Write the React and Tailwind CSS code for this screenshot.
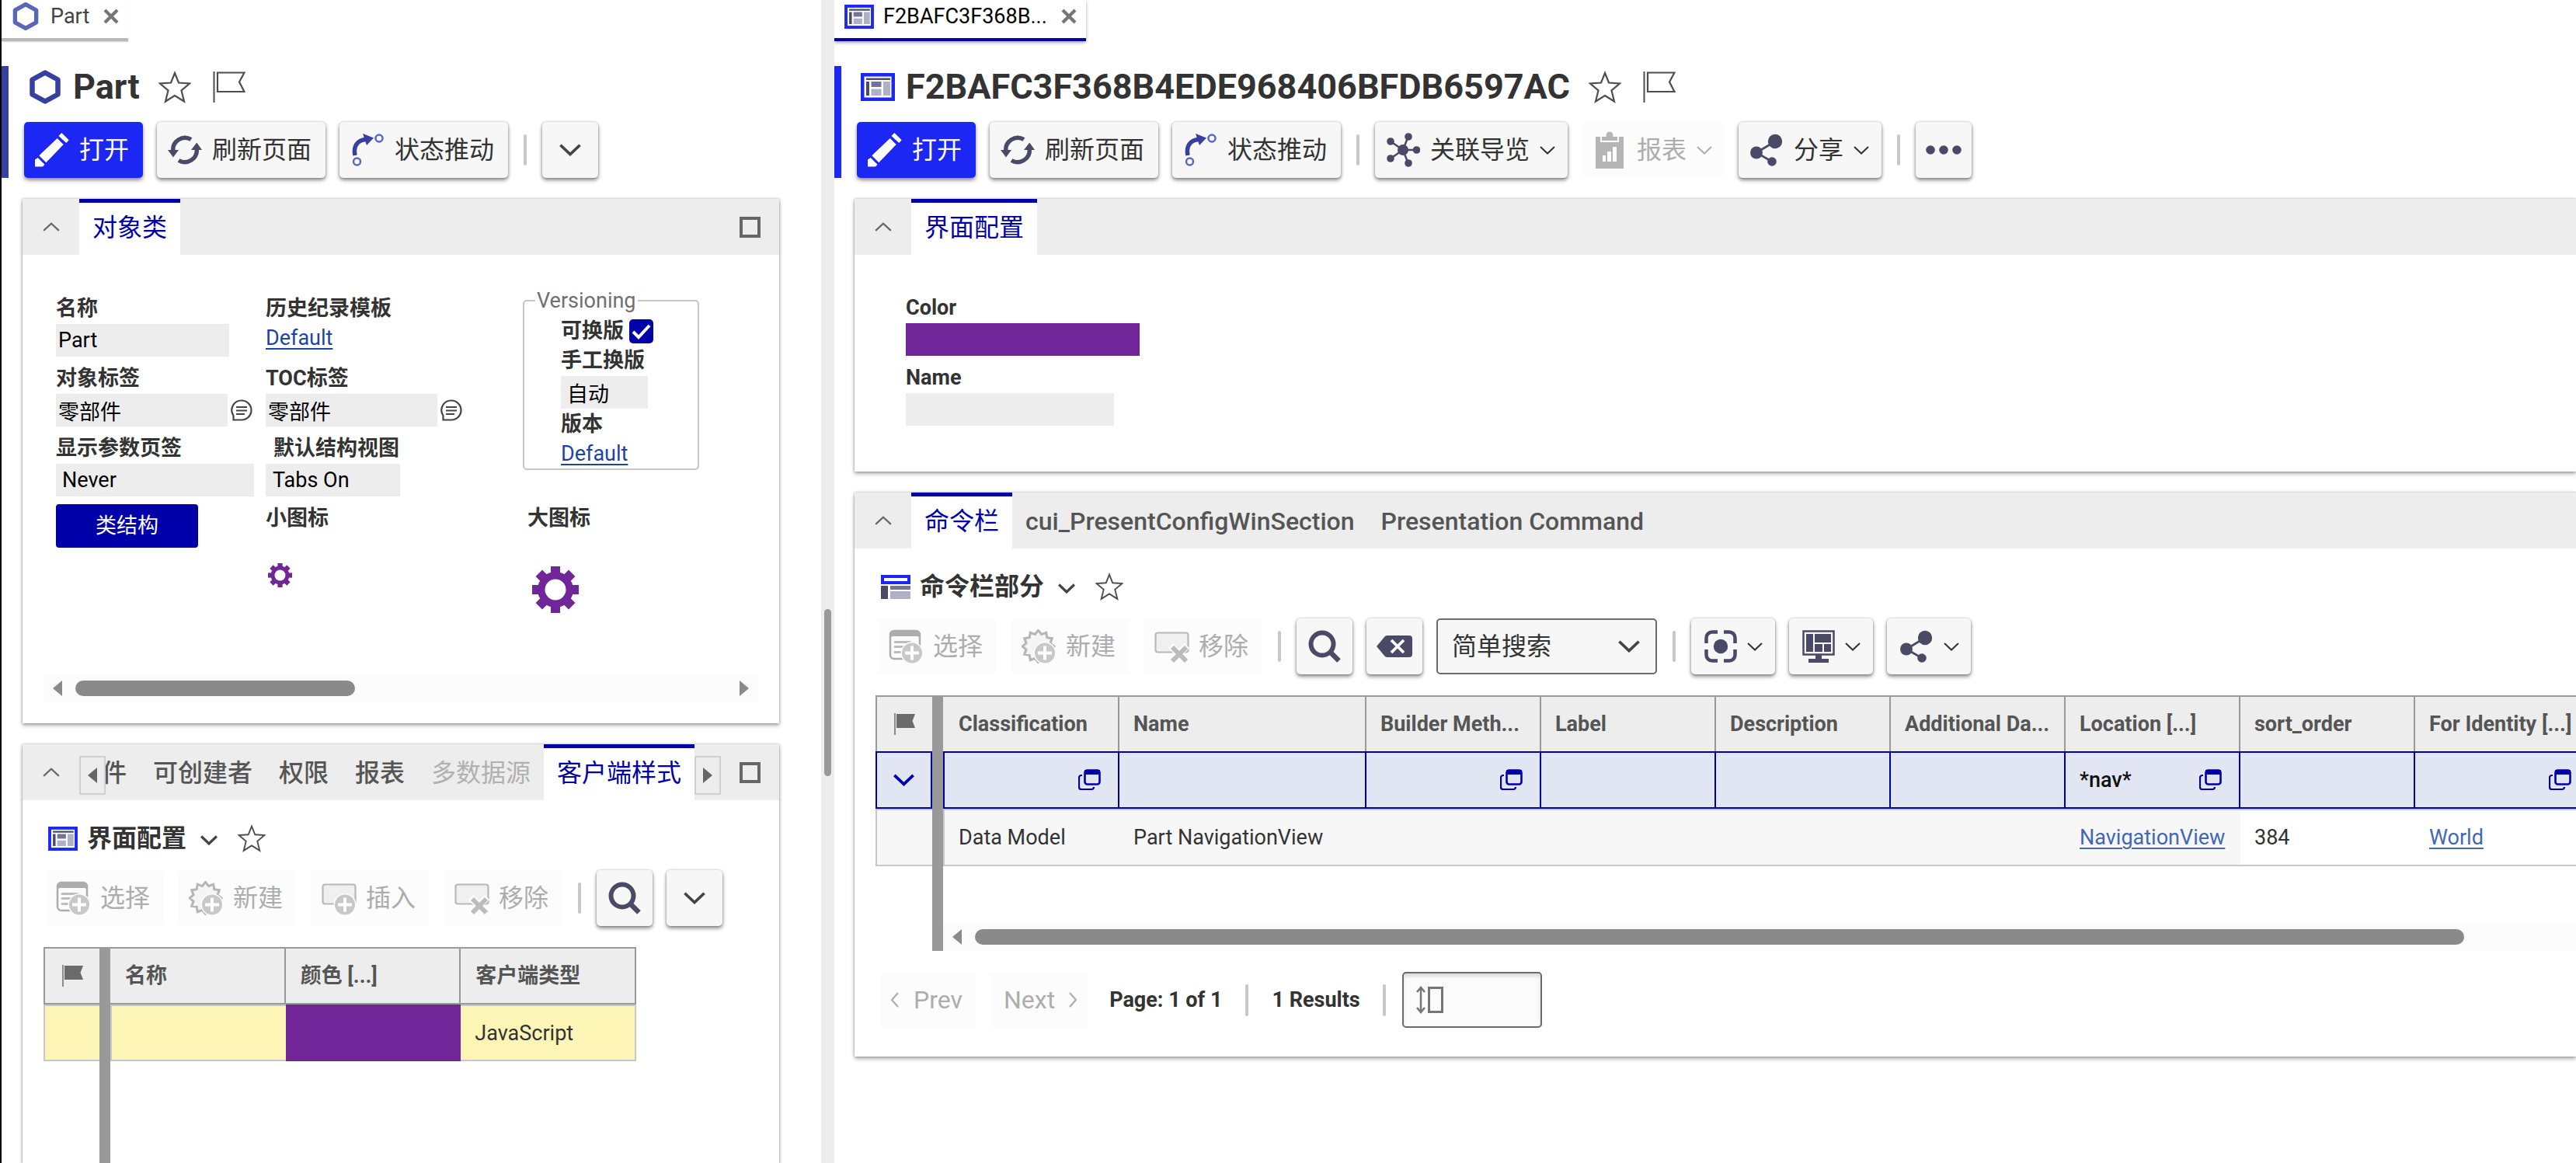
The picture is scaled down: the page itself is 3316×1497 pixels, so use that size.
import React from "react";

/* ---------- icons ---------- */

function Svg({ w = 44, h = 44, vw, vh, children, className = "" }) {
  return (
    <svg
      width={w}
      height={h}
      viewBox={`0 0 ${vw || w} ${vh || h}`}
      fill="none"
      aria-hidden="true"
      className={`shrink-0 ${className}`}
    >
      {children}
    </svg>
  );
}

const DARK = "#4a4a66";

function Hexagon({ w, h, color }) {
  return (
    <Svg w={w} h={h} vw={42} vh={46}>
      <path d="M21 4.5 37.5 13.5v19L21 41.5 4.5 32.5v-19Z" stroke={color} strokeWidth="6.5" strokeLinejoin="round" />
    </Svg>
  );
}

function FormIcon({ w, h }) {
  return (
    <Svg w={w} h={h} vw={44} vh={36}>
      <path d="M0 0h44v36H0z" fill="#1c27f4" />
      <path d="M4.500 4.500h35v27h-35z" fill="#fff" />
      <path d="M7 6.500h31v2.500H7zM7 11h4v18H7z" fill={DARK} />
      <path d="M13.500 11h13v7h-13z" fill="#74749a" />
      <path d="M13.500 20.500h13V29h-13zM29 11h9v18h-9z" fill="#b0b0c8" />
    </Svg>
  );
}

function SectionIcon() {
  return (
    <Svg w={38} h={31}>
      <path d="M0 0h38v12H0z" fill="#1c27f4" />
      <path d="M4 4h30v4H4z" fill="#fff" />
      <path d="M0 14h9v17H0z" fill={DARK} />
      <path d="M12 14h26v5H12z" fill="#74749a" />
      <path d="M12 21h26v10H12z" fill="#b0b0c8" />
    </Svg>
  );
}

function Star({ size = 42 }) {
  return (
    <Svg w={size} h={size} vw={42} vh={42}>
      <path
        d="M21 3 26 15.500 40 16.500 29.500 25.500 33 39.500 21 32 9 39.500 12.500 25.500 2 16.500 16 15.500Z"
        stroke="#4d4d4d"
        strokeWidth="2.200"
      />
    </Svg>
  );
}

function FlagOutline() {
  return (
    <Svg w={42} h={42}>
      <path d="M1.500 1v40" stroke="#4d4d4d" strokeWidth="2" />
      <path d="M6 2.500h34.500L34 14.500l6.500 12.500H6Z" stroke="#4d4d4d" strokeWidth="2.200" />
    </Svg>
  );
}

function FlagSolid() {
  return (
    <Svg w={28} h={28}>
      <path d="M1 0v28" stroke="#6b6b6b" strokeWidth="1.500" />
      <path d="M3 1h24l-3.500 9L27 19H3Z" fill="#6b6b6b" />
    </Svg>
  );
}

function Cross() {
  return (
    <Svg w={20} h={20}>
      <path d="m2 2 16 16M18 2 2 18" stroke="#757575" strokeWidth="4.200" />
    </Svg>
  );
}

function Chevron({ w = 20, h = 11, color = "#444", stroke = 2, up = false }) {
  return (
    <Svg w={w} h={h} vw={20} vh={11}>
      <path d={up ? "m1 10 9-8.500L19 10" : "m1 1 9 8.500L19 1"} stroke={color} strokeWidth={stroke} />
    </Svg>
  );
}

function SideChevron({ right = false }) {
  return (
    <Svg w={12} h={20}>
      <path d={right ? "m2 1 8 9-8 9" : "m10 1-8 9 8 9"} stroke="#adadad" strokeWidth="2.200" />
    </Svg>
  );
}

function Triangle({ right = false, color = "#8a8a8a" }) {
  return (
    <Svg w={12} h={20}>
      <path d={right ? "M0 0v20l12-10Z" : "M12 0v20L0 10Z"} fill={color} />
    </Svg>
  );
}

function SquareIcon() {
  return (
    <Svg w={27} h={27}>
      <path d="M2 2h23v23H2z" stroke="#666" strokeWidth="4" />
    </Svg>
  );
}

function Pencil() {
  return (
    <Svg>
      <path
        d="M34.300 0 43.700 9.300 40.300 13 30.500 4ZM28.700 7l8 8L14.300 38.300l-9-9ZM0 43.500V34.500L3.700 32 12.500 40.700 10 43.500Z"
        fill="#fff"
      />
    </Svg>
  );
}

function Refresh() {
  return (
    <Svg>
      <path d="M6.700 23A15.500 15.500 0 0 1 30 8.500" stroke={DARK} strokeWidth="5.500" />
      <path d="M0 22h14L7 31.500Z" fill={DARK} />
      <path d="M37.300 21A15.500 15.500 0 0 1 14 35.500" stroke={DARK} strokeWidth="5.500" />
      <path d="M30 22h14L37.300 12.500Z" fill={DARK} />
    </Svg>
  );
}

function StateIcon() {
  return (
    <Svg>
      <path d="M6 29C3.500 17 9 9.500 20 8.500" stroke="#36419f" strokeWidth="5.500" />
      <path d="m16 1 14 5.500L21 16Z" fill="#36419f" />
      <circle cx="37" cy="7" r="4.500" stroke="#5b66c0" strokeWidth="2.500" />
      <circle cx="8.500" cy="37" r="4.500" stroke="#5b66c0" strokeWidth="2.500" />
    </Svg>
  );
}

function GraphIcon() {
  return (
    <Svg>
      <path d="M22 22 29 4M22 22 6 11M22 22h18M22 22 6 33M22 22l7 18" stroke={DARK} strokeWidth="2.500" />
      <circle cx="22" cy="22" r="7" fill={DARK} />
      {[[29, 5], [6, 11], [39.5, 22], [6, 33], [29, 39]].map(([x, y]) => (
        <circle key={`${x}-${y}`} cx={x} cy={y} r="4.800" fill={DARK} />
      ))}
    </Svg>
  );
}

function ReportIcon() {
  return (
    <Svg w={38} h={48}>
      <path d="M1 7h36v41H1z" fill="#b5b5b5" />
      <path d="M8 6h22v7H8z" fill="#b5b5b5" stroke="#fcfcfc" strokeWidth="2" />
      <circle cx="19" cy="5" r="4.500" fill="#b5b5b5" />
      <path d="M10 31h4v8h-4zM16 26h5v13h-5zM23 20h5v19h-5z" fill="#fcfcfc" />
    </Svg>
  );
}

function ShareIcon() {
  return (
    <Svg>
      <path d="M33 11 9 25.500 29 37" stroke={DARK} strokeWidth="2.800" />
      <circle cx="33" cy="11" r="9.200" fill={DARK} />
      <circle cx="9" cy="25.500" r="8" fill={DARK} />
      <circle cx="29" cy="37" r="5.800" fill={DARK} />
    </Svg>
  );
}

function Dots() {
  return (
    <Svg w={46} h={12}>
      <circle cx="6" cy="6" r="5.800" fill={DARK} />
      <circle cx="23" cy="6" r="5.800" fill={DARK} />
      <circle cx="40" cy="6" r="5.800" fill={DARK} />
    </Svg>
  );
}

function SearchIcon() {
  return (
    <Svg w={42} h={42}>
      <circle cx="18" cy="18" r="14.500" stroke={DARK} strokeWidth="6" />
      <path d="m28 28 11.500 11.500" stroke={DARK} strokeWidth="6.500" />
    </Svg>
  );
}

function ClearIcon() {
  return (
    <Svg w={46} h={28}>
      <path d="M14 0h28a4 4 0 0 1 4 4v20a4 4 0 0 1-4 4H14c-2 0-3-.8-4-2L0 14 10 2c1-1.200 2-2 4-2Z" fill={DARK} />
      <path d="m19 6 16 16M35 6 19 22" stroke="#fff" strokeWidth="3.800" />
    </Svg>
  );
}

function FocusIcon() {
  return (
    <Svg w={42} h={42}>
      <path
        d="M2.500 17V10a7.500 7.500 0 0 1 7.500-7.500h7M25 2.500h7a7.500 7.500 0 0 1 7.500 7.500v7M39.500 25v7a7.500 7.500 0 0 1-7.500 7.500h-7M17 39.500h-7A7.500 7.500 0 0 1 2.500 32v-7"
        stroke={DARK}
        strokeWidth="4.500"
      />
      <circle cx="21" cy="21" r="9.200" fill={DARK} />
    </Svg>
  );
}

function MonitorIcon() {
  return (
    <Svg w={42} h={42}>
      <path d="M1.500 1.500h39v30h-39z" stroke={DARK} strokeWidth="2.500" />
      <path d="M5 5h9v23H5zM16 5h21v11H16zM16 18h10v10H16zM28 18h9v10h-9zM17 32h8v5h9v5H8v-5h9z" fill={DARK} />
    </Svg>
  );
}

function PlusBadge() {
  return (
    <>
      <circle cx="30" cy="30.500" r="14.500" fill="#fcfcfc" />
      <circle cx="30" cy="30.500" r="13" fill="#c8c8c8" />
      <path d="M30 21.500v18M21 30.500h18" stroke="#fff" strokeWidth="4" />
    </>
  );
}

function SelectIcon() {
  return (
    <Svg w={44} h={44}>
      <path d="M2 7a5 5 0 0 1 5-5h28a5 5 0 0 1 5 5v26a5 5 0 0 1-5 5H7a5 5 0 0 1-5-5Z" fill="#fcfcfc" stroke="#adadad" strokeWidth="2.500" />
      <path d="M1 13V7a6 6 0 0 1 6-6h28a6 6 0 0 1 6 6v6q-1-4-5-4H6q-4 0-5 4Z" fill="#adadad" />
      <path d="M8 16.500h20M8 22.500h13M8 29.500h12" stroke="#bcbcbc" strokeWidth="3" strokeLinecap="round" />
      <PlusBadge />
    </Svg>
  );
}

const BURST = Array.from({ length: 24 }, (_, i) => {
  const radius = i % 2 ? 16 : 20.5;
  const angle = (i * Math.PI) / 12 - Math.PI / 2;
  return `${21.5 + radius * Math.cos(angle)},${22 + radius * Math.sin(angle)}`;
}).join(" ");

function NewIcon() {
  return (
    <Svg w={44} h={44}>
      <polygon points={BURST} fill="#f5f5f5" stroke="#b5b5b5" strokeWidth="3" />
      <PlusBadge />
    </Svg>
  );
}

function InsertIcon() {
  return (
    <Svg w={45} h={44}>
      <rect x="1.500" y="4.500" width="42" height="25" rx="3" fill="#f0f0f0" stroke="#b8b8b8" strokeWidth="2.200" />
      <PlusBadge />
    </Svg>
  );
}

function RemoveIcon() {
  return (
    <Svg w={45} h={44}>
      <rect x="1.500" y="4.500" width="42" height="25" rx="3" fill="#f0f0f0" stroke="#b8b8b8" strokeWidth="2.200" />
      <path d="m21 21 21 21M42 21 21 42" stroke="#fcfcfc" strokeWidth="9" />
      <path d="m23 23 18 18M41 23 23 41" stroke="#bcbcbc" strokeWidth="6" />
    </Svg>
  );
}

function Note() {
  return (
    <Svg w={28} h={28}>
      <path d="M14 1.500A12.500 12.500 0 1 1 14 26.500H3.500V21A12.500 12.500 0 0 1 14 1.500Z" stroke="#444" strokeWidth="2.200" />
      <path d="M7 10h14M7 14.500h14M7 19h11" stroke="#444" strokeWidth="2" />
    </Svg>
  );
}

function Gear({ size }) {
  return (
    <Svg w={size} h={size} vw={60} vh={60}>
      <g fill="#702599">
        {[0, 45, 90, 135].map((a) => (
          <path key={a} d="M24 0h12v60H24z" transform={`rotate(${a} 30 30)`} />
        ))}
        <circle cx="30" cy="30" r="23" />
      </g>
      <circle cx="30" cy="30" r="13.500" fill="#fff" />
    </Svg>
  );
}

function Lookup() {
  return (
    <Svg w={29} h={28}>
      <path d="M5 8H4a3 3 0 0 0-3 3v12a3 3 0 0 0 3 3h13a3 3 0 0 0 3-3" stroke="#0000aa" strokeWidth="2.200" />
      <rect x="8.500" y="1.500" width="19" height="18" rx="3" stroke="#0000aa" strokeWidth="2.600" />
      <path d="M8 1h20v6H8z" fill="#0000aa" />
    </Svg>
  );
}

function PageSizeIcon() {
  return (
    <Svg w={36} h={36}>
      <path d="M6 4v28M1 8l5-6 5 6M1 28l5 6 5-6" stroke="#757575" strokeWidth="2.500" />
      <path d="M16.500 2.500h17v31h-17z" stroke="#757575" strokeWidth="3" />
    </Svg>
  );
}

/* ---------- shared controls ---------- */

const BTN = "flex h-[72px] shrink-0 items-center rounded-[5px] text-[32px] leading-9 whitespace-nowrap";
const RAISED = "bg-[#f7f7f7] text-[#333] shadow-[0_0_3px_rgba(0,0,0,0.25),0_3px_5px_rgba(0,0,0,0.45)]";

function Tool({ icon, label, menu, primary, disabled }) {
  const look = primary
    ? "bg-[#1c27f4] text-white shadow-[0_3px_5px_rgba(0,0,0,0.45)]"
    : disabled
    ? "bg-[#fcfcfc] text-[#adadad]"
    : RAISED;
  return (
    <button type="button" disabled={disabled} className={`${BTN} gap-[13px] pl-[14px] ${menu ? "pr-4" : "pr-[18px]"} ${look}`}>
      <span className="flex w-11 justify-center">{icon}</span>
      {label}
      {menu && <Chevron color={disabled ? "#adadad" : "#333"} />}
    </button>
  );
}

function IconTool({ label, children, wide }) {
  return (
    <button type="button" aria-label={label} className={`${BTN} justify-center gap-[13px] ${wide ? "w-[108px]" : "w-[72px]"} ${RAISED}`}>
      {children}
    </button>
  );
}

function Sep() {
  return <span className="mx-[2px] h-10 w-1 shrink-0 rounded-full bg-[#c8c8c8]" />;
}

function DocTab({ icon, label, active }) {
  return (
    <div className="flex">
      <div
        className={`flex h-[53px] items-center border-b-4 pr-3 pb-[7px] pl-[13px] text-[27px] leading-8 ${
          active ? "border-[#0000aa] text-black shadow-[0_2px_4px_rgba(0,0,0,0.35)]" : "border-[#b9b9b9] text-[#444] shadow-[0_1px_1px_rgba(0,0,0,0.15)]"
        }`}
      >
        {icon}
        <span className={active ? "ml-3" : "ml-[14px]"}>{label}</span>
        <button type="button" aria-label="Close tab" className="ml-[18px]">
          <Cross />
        </button>
      </div>
    </div>
  );
}

function ItemHeader({ bar, icon, title, children }) {
  return (
    <header className={`mt-8 border-l-[9px] ${bar}`}>
      <div className="flex h-[54px] items-center pl-[25px]">
        {icon}
        <h1 className="ml-[14px] text-[45px] leading-[54px] font-bold text-[#333]">{title}</h1>
        <button type="button" aria-label="Favorite" className="ml-6">
          <Star />
        </button>
        <button type="button" aria-label="Flag" className="ml-7">
          <FlagOutline />
        </button>
      </div>
      <div className="mt-[18px] flex items-center gap-[18px] pl-5">{children}</div>
    </header>
  );
}

function Panel({ tabs, className = "", children }) {
  return (
    <section className={`bg-white shadow-[0_0_3px_rgba(0,0,0,0.3),0_3px_5px_rgba(0,0,0,0.3)] ${className}`}>
      <div className="flex h-[72px] bg-[#ededed]">
        <button type="button" aria-label="Collapse" className="flex w-[73px] shrink-0 items-center justify-center">
          <Chevron up w={22} h={12} color="#666" />
        </button>
        {tabs}
      </div>
      {children}
    </section>
  );
}

function Tab({ label, active, disabled }) {
  const look = active
    ? "border-[#0000aa] bg-white text-[#0000aa]"
    : disabled
    ? "border-transparent text-[#b0b0b0]"
    : "border-transparent font-medium text-[#555]";
  return (
    <button
      type="button"
      disabled={disabled}
      className={`shrink-0 border-t-[5px] px-[17px] pb-1 text-[32px] leading-10 whitespace-nowrap ${look}`}
    >
      {label}
    </button>
  );
}

function Maximize() {
  return (
    <button type="button" aria-label="Maximize" className="mr-6 ml-auto self-center">
      <SquareIcon />
    </button>
  );
}

function RelTitle({ icon, label }) {
  return (
    <div className="flex h-10 items-center">
      {icon}
      <h2 className="ml-3 text-[32px] leading-10 font-bold text-[#333]">{label}</h2>
      <button type="button" aria-label="Views" className="mt-1 ml-[18px]">
        <Chevron w={22} h={13} stroke={3} />
      </button>
      <button type="button" aria-label="Favorite" className="ml-[26px]">
        <Star size={36} />
      </button>
    </div>
  );
}

const LABEL = "block text-[27px] leading-9 font-bold whitespace-nowrap text-[#333]";
const INPUT = "h-[42px] bg-[#ededed] text-[27px] leading-8 text-black";
const LINK = "text-[27px] leading-9 text-[#1e43a5] underline decoration-2 underline-offset-4";

function Field({ id, label, value, className, indent = "pl-[3px]", labelIndent = "", note }) {
  return (
    <div className="flex flex-col gap-[2px]">
      <label htmlFor={id} className={`${LABEL} ${labelIndent}`}>
        {label}
      </label>
      <div className="flex items-center gap-1">
        <input id={id} readOnly defaultValue={value} className={`${INPUT} ${indent} ${className}`} />
        {note && (
          <button type="button" aria-label="Translate">
            <Note />
          </button>
        )}
      </div>
    </div>
  );
}

const TH = "h-[72px] border-t-2 border-r-2 border-[#999] bg-[#ededed] text-left text-[27px] leading-8 font-bold text-[#555]";

/* ---------- left pane ---------- */

function ClassForm() {
  return (
    <div className="flex h-[603px] flex-col px-[27px] pt-[45px] pb-[27px]">
      <div className="flex pl-4">
        <div className="grid grid-cols-[270px_331px] gap-y-[10px] self-start pt-[6px]">
          <Field id="name" label="名称" value="Part" className="w-[223px]" />
          <div className="flex flex-col items-start gap-[2px]">
            <span className={LABEL}>历史纪录模板</span>
            <a href="#history" className={LINK}>Default</a>
          </div>
          <Field id="label" label="对象标签" value="零部件" className="w-[221px]" note />
          <Field id="toc" label="TOC标签" value="零部件" className="w-[221px]" note />
          <Field id="params" label="显示参数页签" value="Never" className="w-[255px]" indent="pl-2" />
          <Field id="structure" label="默认结构视图" value="Tabs On" className="w-[173px]" indent="pl-[9px]" labelIndent="pl-[10px]" />
        </div>
        <fieldset className="w-[227px] self-start rounded-[5px] border-2 border-[#c6c6c6] pt-[7px] pb-[1px] pl-[47px]">
          <legend className="-ml-[33px] px-[2px] text-[27px] leading-7 text-[#707070]">Versioning</legend>
          <div className="flex flex-col items-start gap-[2px]">
            <div className="flex items-center gap-[7px]">
              <label htmlFor="versionable" className={LABEL}>可换版</label>
              <span className="grid">
                <input
                  id="versionable"
                  type="checkbox"
                  defaultChecked
                  className="col-start-1 row-start-1 size-[31px] appearance-none rounded-[5px] bg-[#0000aa]"
                />
                <Svg w={31} h={31} className="pointer-events-none col-start-1 row-start-1">
                  <path d="m5 16 7 7L26 8" stroke="#fff" strokeWidth="4" />
                </Svg>
              </span>
            </div>
            <label htmlFor="manual" className={LABEL}>手工换版</label>
            <input id="manual" readOnly defaultValue="自动" className={`${INPUT} w-28 pl-2`} />
            <span className={LABEL}>版本</span>
            <a href="#revision" className={LINK}>Default</a>
          </div>
        </fieldset>
      </div>
      <div className="mt-[10px] grid grid-cols-[270px_337px_1fr] pl-4">
        <div>
          <button type="button" className="h-14 w-[183px] rounded-[4px] bg-[#0000aa] text-[27px] leading-8 text-white">
            类结构
          </button>
        </div>
        <div>
          <span className={LABEL}>小图标</span>
          <div className="mt-10 pl-[3px]"><Gear size={31} /></div>
        </div>
        <div>
          <span className={LABEL}>大图标</span>
          <div className="mt-11 pl-[6px]"><Gear size={60} /></div>
        </div>
      </div>
      <div className="mt-auto flex h-9 items-center bg-[#fbfbfb] px-3">
        <Triangle />
        <div className="mx-[17px] flex-1">
          <div className="h-5 w-[43%] rounded-full bg-[#8a8a8a]" />
        </div>
        <Triangle right />
      </div>
    </div>
  );
}

function StyleGrid() {
  return (
    <div className="mt-[27px] ml-[27px] flex flex-1">
      <table aria-label="行标记" className="w-[72px] table-fixed border-separate border-spacing-0 self-start">
        <thead>
          <tr>
            <th className="h-[74px] border-y-2 border-l-2 border-[#999] bg-[#ededed] pl-[22px]"><FlagSolid /></th>
          </tr>
        </thead>
        <tbody>
          <tr>
            <td className="h-[73px] border-y-2 border-l-2 border-[#c8c8c8] bg-[#fcf5b5]" />
          </tr>
        </tbody>
      </table>
      <div className="w-[14px] shrink-0 bg-[#999]" />
      <table aria-label="客户端样式" className="w-[677px] table-fixed border-separate border-spacing-0 self-start">
        <thead>
          <tr>
            {["名称", "颜色 [...]", "客户端类型"].map((t) => (
              <th key={t} scope="col" className="h-[74px] border-y-2 border-r-2 border-[#999] bg-[#ededed] pl-[19px] text-left text-[27px] leading-8 font-bold text-[#555]">
                {t}
              </th>
            ))}
          </tr>
        </thead>
        <tbody>
          <tr>
            <td className="h-[73px] border-y-2 border-l-2 border-[#c8c8c8] bg-[#fcf5b5]" />
            <td className="bg-[#702599]" />
            <td className="border-y-2 border-r-2 border-[#c8c8c8] bg-[#fcf5b5] pl-[18px] text-[27px] leading-8 text-[#333]">JavaScript</td>
          </tr>
        </tbody>
      </table>
    </div>
  );
}

function ArrowTab({ right }) {
  return (
    <button
      type="button"
      aria-label={right ? "Scroll tabs right" : "Scroll tabs left"}
      className="mt-[15px] flex h-[50px] w-[34px] shrink-0 items-center justify-center border-2 border-[#d0d0d0]"
    >
      <Triangle right={right} color="#666" />
    </button>
  );
}

function LeftPane() {
  return (
    <div className="flex min-w-0 flex-[1055] flex-col overflow-hidden border-l-2 border-black">
      <DocTab icon={<Hexagon w={36} h={38} color="#5b66b5" />} label="Part" />
      <ItemHeader bar="border-[#36419f]" icon={<Hexagon w={44} h={46} color="#36419f" />} title="Part">
        <Tool primary icon={<Pencil />} label="打开" />
        <Tool icon={<Refresh />} label="刷新页面" />
        <Tool icon={<StateIcon />} label="状态推动" />
        <Sep />
        <IconTool label="更多"><Chevron w={28} h={16} stroke={2.6} /></IconTool>
      </ItemHeader>
      <Panel
        className="mt-[27px] mr-[54px] ml-[27px]"
        tabs={<><Tab label="对象类" active /><Maximize /></>}
      >
        <ClassForm />
      </Panel>
      <Panel
        className="mt-[27px] mr-[54px] ml-[27px] flex flex-1 flex-col"
        tabs={
          <>
            <ArrowTab />
            <div className="flex w-[564px] shrink-0 justify-end overflow-hidden">
              <Tab label="件" />
              <Tab label="可创建者" />
              <Tab label="权限" />
              <Tab label="报表" />
              <Tab label="多数据源" disabled />
            </div>
            <Tab label="客户端样式" active />
            <ArrowTab right />
            <Maximize />
          </>
        }
      >
        <div className="mt-[29px] pl-[33px]">
          <RelTitle icon={<FormIcon w={38} h={31} />} label="界面配置" />
        </div>
        <div className="mt-[21px] flex items-center gap-[18px] pl-[29px]">
          <Tool disabled icon={<SelectIcon />} label="选择" />
          <Tool disabled icon={<NewIcon />} label="新建" />
          <Tool disabled icon={<InsertIcon />} label="插入" />
          <Tool disabled icon={<RemoveIcon />} label="移除" />
          <Sep />
          <IconTool label="搜索"><SearchIcon /></IconTool>
          <IconTool label="更多"><Chevron w={28} h={16} stroke={2.6} /></IconTool>
        </div>
        <StyleGrid />
      </Panel>
    </div>
  );
}

/* ---------- right pane ---------- */

const COLUMNS = [
  { title: "Classification", width: 227, value: "Data Model", lookup: true },
  { title: "Name", width: 318, value: "Part NavigationView" },
  { title: "Builder Meth...", width: 225, lookup: true },
  { title: "Label", width: 225 },
  { title: "Description", width: 225 },
  { title: "Additional Da...", width: 225 },
  { title: "Location [...]", width: 225, value: "NavigationView", link: true, filter: "*nav*", lookup: true },
  { title: "sort_order", width: 225, value: "384", editable: true },
  { title: "For Identity [...]", width: 225, value: "World", link: true, editable: true, lookup: true },
];

function CommandGrid() {
  return (
    <div className="mt-[27px] ml-[27px] flex overflow-hidden">
      <table aria-label="行标记" className="w-[73px] shrink-0 table-fixed border-separate border-spacing-0 self-start">
        <thead>
          <tr>
            <th className="h-[72px] border-t-2 border-l-2 border-[#999] bg-[#ededed] pl-[22px]"><FlagSolid /></th>
          </tr>
          <tr>
            <td className="h-[74px] border-2 border-[#0000aa] bg-[#e2e5f2]">
              <button type="button" aria-label="筛选" className="flex w-full justify-center">
                <Chevron w={27} h={16} stroke={2.8} color="#0000aa" />
              </button>
            </td>
          </tr>
        </thead>
        <tbody>
          <tr>
            <td className="h-[74px] border-y-2 border-l-2 border-[#c8c8c8] bg-[#f7f7f7]" />
          </tr>
        </tbody>
      </table>
      <div className="w-[14px] shrink-0 bg-[#999]" />
      <div className="min-w-0 flex-1 overflow-hidden">
        <table aria-label="命令栏部分" className="w-[2120px] table-fixed border-separate border-spacing-0">
          <colgroup>
            {COLUMNS.map((c) => (
              <col key={c.title} style={{ width: c.width }} />
            ))}
          </colgroup>
          <thead>
            <tr>
              {COLUMNS.map((c, i) => (
                <th key={c.title} scope="col" className={`${TH} whitespace-nowrap ${i === 0 ? "pl-5" : "pl-[18px]"}`}>
                  {c.title}
                </th>
              ))}
            </tr>
            <tr>
              {COLUMNS.map((c, i) => (
                <td
                  key={c.title}
                  className={`h-[74px] border-y-2 border-r-2 border-[#0000aa] bg-[#e2e5f2] pr-[22px] pl-[18px] ${i === 0 ? "border-l-2" : ""}`}
                >
                  <div className="flex items-center">
                    <input
                      aria-label={`Filter ${c.title}`}
                      defaultValue={c.filter || ""}
                      className="w-0 min-w-0 flex-1 bg-transparent text-[27px] leading-8 font-medium text-[#111] outline-none"
                    />
                    {c.lookup && (
                      <button type="button" aria-label={`Look up ${c.title}`}>
                        <Lookup />
                      </button>
                    )}
                  </div>
                </td>
              ))}
            </tr>
          </thead>
          <tbody>
            <tr>
              {COLUMNS.map((c, i) => (
                <td
                  key={c.title}
                  className={`h-[74px] border-y-2 border-[#c8c8c8] pl-[18px] text-[27px] leading-8 whitespace-nowrap text-[#333] ${
                    c.editable ? "bg-white" : "bg-[#f7f7f7]"
                  } ${i === 0 ? "border-l-2" : ""}`}
                >
                  {c.link ? (
                    <a href="#item" className="text-[#4268b4] underline decoration-2 underline-offset-4">{c.value}</a>
                  ) : (
                    c.value
                  )}
                </td>
              ))}
            </tr>
          </tbody>
        </table>
        <div className="mt-[73px] flex h-9 items-center bg-[#fbfbfb] pl-3">
          <Triangle />
          <div className="ml-[17px] flex-1">
            <div className="h-5 w-[93%] rounded-full bg-[#8a8a8a]" />
          </div>
        </div>
      </div>
    </div>
  );
}

function Pager() {
  const page = "flex h-[70px] items-center rounded-[4px] bg-[#fcfcfc] text-[32px] leading-9 text-[#adadad]";
  return (
    <div className="mt-[27px] ml-[34px] flex items-center">
      <button type="button" disabled className={`${page} gap-[18px] pr-[17px] pl-3`}>
        <SideChevron />
        Prev
      </button>
      <button type="button" disabled className={`${page} ml-[18px] gap-[17px] pr-[14px] pl-[18px]`}>
        Next
        <SideChevron right />
      </button>
      <span className="ml-[27px] text-[27px] leading-8 font-bold text-[#333]">Page: 1 of 1</span>
      <span className="ml-[30px] h-[41px] w-1 rounded-full bg-[#c8c8c8]" />
      <span className="ml-[30px] text-[27px] leading-8 font-bold text-[#333]">1 Results</span>
      <span className="ml-[29px] h-[41px] w-1 rounded-full bg-[#c8c8c8]" />
      <label className="ml-[21px] flex h-[72px] w-[180px] items-center rounded-[5px] border-2 border-[#6b6b6b] bg-[#fbfbfb] pl-4 shadow-[inset_0_4px_4px_rgba(0,0,0,0.12)]">
        <PageSizeIcon />
        <input aria-label="Page size" className="w-0 min-w-0 flex-1 bg-transparent px-3 text-[27px] outline-none" />
      </label>
    </div>
  );
}

function RightPane() {
  return (
    <div className="flex min-w-0 flex-[2242] flex-col overflow-hidden">
      <DocTab active icon={<FormIcon w={38} h={31} />} label="F2BAFC3F368B..." />
      <ItemHeader bar="border-[#1c27f4]" icon={<FormIcon w={44} h={36} />} title="F2BAFC3F368B4EDE968406BFDB6597AC">
        <Tool primary icon={<Pencil />} label="打开" />
        <Tool icon={<Refresh />} label="刷新页面" />
        <Tool icon={<StateIcon />} label="状态推动" />
        <Sep />
        <Tool menu icon={<GraphIcon />} label="关联导览" />
        <Tool menu disabled icon={<ReportIcon />} label="报表" />
        <Tool menu icon={<ShareIcon />} label="分享" />
        <Sep />
        <IconTool label="更多"><Dots /></IconTool>
      </ItemHeader>
      <Panel className="mt-[27px] ml-[26px]" tabs={<Tab label="界面配置" active />}>
        <div className="flex flex-col gap-[10px] pt-[50px] pb-[59px] pl-[66px]">
          <div className="flex flex-col gap-[2px]">
            <label htmlFor="color" className={LABEL}>Color</label>
            <input id="color" readOnly className="h-[42px] w-[301px] bg-[#702599]" />
          </div>
          <Field id="pname" label="Name" value="" className="w-[268px]" />
        </div>
      </Panel>
      <Panel
        className="mt-[27px] ml-[26px]"
        tabs={
          <>
            <Tab label="命令栏" active />
            <Tab label="cui_PresentConfigWinSection" />
            <Tab label="Presentation Command" />
          </>
        }
      >
        <div className="pt-[29px] pb-[37px]">
          <div className="pl-[34px]">
            <RelTitle icon={<SectionIcon />} label="命令栏部分" />
          </div>
          <div className="mt-[21px] flex items-center gap-[18px] pl-[30px]">
            <Tool disabled icon={<SelectIcon />} label="选择" />
            <Tool disabled icon={<NewIcon />} label="新建" />
            <Tool disabled icon={<RemoveIcon />} label="移除" />
            <Sep />
            <IconTool label="搜索"><SearchIcon /></IconTool>
            <IconTool label="清除"><ClearIcon /></IconTool>
            <span className="grid w-[284px] shrink-0 items-center">
              <select
                aria-label="搜索方式"
                defaultValue="simple"
                className="col-start-1 row-start-1 h-[72px] w-full appearance-none rounded-[5px] border-2 border-[#6b6b6b] bg-[#f7f7f7] pl-[18px] text-[32px] leading-9 text-[#333]"
              >
                <option value="simple">简单搜索</option>
              </select>
              <span className="pointer-events-none col-start-1 row-start-1 mr-[22px] justify-self-end">
                <Chevron w={28} h={16} stroke={2.6} />
              </span>
            </span>
            <Sep />
            <IconTool wide label="聚焦"><FocusIcon /><Chevron color="#333" /></IconTool>
            <IconTool wide label="显示"><MonitorIcon /><Chevron color="#333" /></IconTool>
            <IconTool wide label="分享"><ShareIcon /><Chevron color="#333" /></IconTool>
          </div>
          <CommandGrid />
          <Pager />
        </div>
      </Panel>
    </div>
  );
}

export default function App() {
  return (
    <main className="flex h-screen overflow-hidden bg-white font-['Roboto','Noto_Sans_CJK_SC',sans-serif] text-[#333]">
      <LeftPane />
      <div className="w-[17px] shrink-0 bg-[#ededed] px-1">
        <div className="mt-[784px] h-[215px] rounded-full bg-[#999]" />
      </div>
      <RightPane />
    </main>
  );
}
